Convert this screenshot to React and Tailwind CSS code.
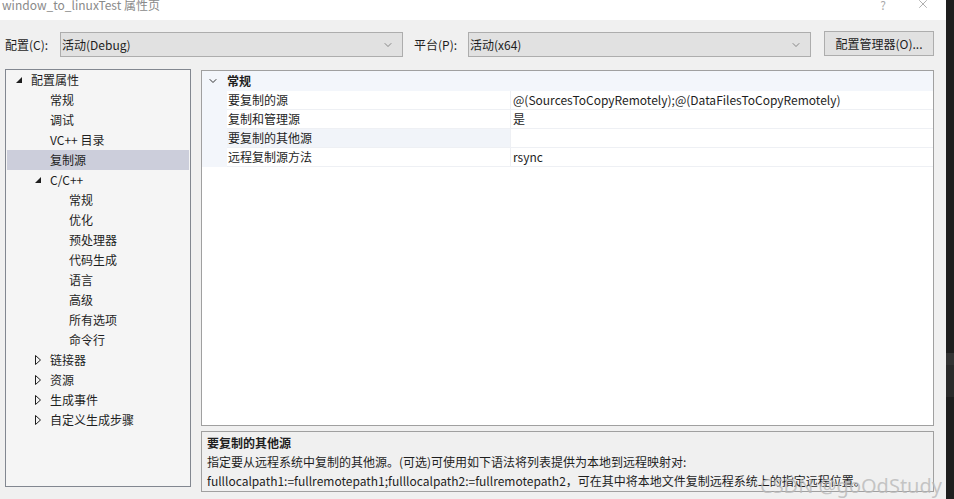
import { ChevronDown, X } from "lucide-react";

const font = { fontFamily: '"Noto Sans CJK SC", "Noto Sans", sans-serif' };

const tree = [
  { label: "配置属性", level: 0, arrow: "open" },
  { label: "常规", level: 1 },
  { label: "调试", level: 1 },
  { label: "VC++ 目录", level: 1 },
  { label: "复制源", level: 1, selected: true },
  { label: "C/C++", level: 1, arrow: "open" },
  { label: "常规", level: 2 },
  { label: "优化", level: 2 },
  { label: "预处理器", level: 2 },
  { label: "代码生成", level: 2 },
  { label: "语言", level: 2 },
  { label: "高级", level: 2 },
  { label: "所有选项", level: 2 },
  { label: "命令行", level: 2 },
  { label: "链接器", level: 1, arrow: "closed" },
  { label: "资源", level: 1, arrow: "closed" },
  { label: "生成事件", level: 1, arrow: "closed" },
  { label: "自定义生成步骤", level: 1, arrow: "closed" },
];

const props = [
  { name: "要复制的源", value: "@(SourcesToCopyRemotely);@(DataFilesToCopyRemotely)" },
  { name: "复制和管理源", value: "是" },
  { name: "要复制的其他源", value: "", selected: true },
  { name: "远程复制源方法", value: "rsync" },
];

const indent = { 0: "ml-[7px]", 1: "ml-[26px]", 2: "ml-[45px]" };

function Arrow({ type }) {
  if (type === "open") {
    return (
      <svg width="7" height="7" viewBox="0 0 7 7">
        <polygon points="6,0 6,6 0,6" fill="#1e1e1e" />
      </svg>
    );
  }
  return (
    <svg width="6" height="10" viewBox="0 0 6 10">
      <polygon points="0.5,0.5 5.5,5 0.5,9.5" fill="none" stroke="#1e1e1e" strokeWidth="1" />
    </svg>
  );
}

function Select({ text, width }) {
  return (
    <div className={`flex h-[25px] ${width} items-center justify-between border border-[#adadad] bg-[#e1e1e1] pl-[1px] pr-[8px] text-[12px] text-[#1e1e1e]`}>
      <span>{text}</span>
      <ChevronDown size={12} strokeWidth={1.3} color="#555" />
    </div>
  );
}

export default function App() {
  return (
    <div className="relative flex h-[499px] w-[954px] overflow-hidden bg-[#1e1e1e]" style={font}>
      <div className="flex w-[946px] flex-col bg-[#f0f0f0]">
        {/* title bar */}
        <div className="flex h-[20px] items-start justify-between bg-white">
          <span className="-mt-[4px] pl-[2px] text-[12px] text-[#8a8a8a]">window_to_linuxTest 属性页</span>
          <div className="flex items-start gap-[30px] pr-[16px]">
            <span className="-mt-[4px] text-[12px] text-[#aaa]">?</span>
            <X size={14} strokeWidth={1} color="#777" className="-mt-[3px]" />
          </div>
        </div>

        {/* config row */}
        <div className="mt-[12px] flex h-[25px] items-center whitespace-nowrap text-[12px] text-[#1e1e1e]">
          <span className="w-[60px] pl-[5px]">配置(C):</span>
          <Select text="活动(Debug)" width="w-[343px]" />
          <span className="w-[65px] pl-[11px]">平台(P):</span>
          <Select text="活动(x64)" width="w-[343px]" />
          <div className="ml-[13px] -mt-[2px] flex h-[25px] w-[110px] items-center justify-center border border-[#adadad] bg-[#e1e1e1]">
            配置管理器(O)...
          </div>
        </div>

        <div className="mt-[12px] flex">
          {/* tree */}
          <div className="ml-[5px] h-[418px] w-[186px] border border-[#828790] bg-[#f5f5f5] text-[12px] text-[#1e1e1e]">
            {tree.map((t, i) => (
              <div
                key={i}
                className={`mx-[1px] flex h-[20px] items-center ${t.selected ? "bg-[#cccedb]" : ""}`}
              >
                <div className={`flex w-[10px] shrink-0 justify-center ${indent[t.level]}`}>
                  {t.arrow && <Arrow type={t.arrow} />}
                </div>
                <span className="ml-[7px]">{t.label}</span>
              </div>
            ))}
          </div>

          {/* right side */}
          <div className="ml-[10px] flex w-[733px] flex-col pt-[1px]">
            <div className="h-[356px] border border-[#a0a0a0] bg-white text-[12px] text-[#1e1e1e]">
              <div className="flex h-[20px] items-center bg-[#f3f6fb]">
                <div className="flex w-[25px] pl-[5px]">
                  <ChevronDown size={12} strokeWidth={2} color="#333" />
                </div>
                <span className="font-bold">常规</span>
              </div>
              {props.map((p, i) => (
                <div key={i} className="flex h-[19px]">
                  <div className="w-[25px] bg-[#f3f6fb]" />
                  <div
                    className={`flex w-[283px] items-center border-b border-[#eef0f4] pl-[1px] ${p.selected ? "bg-[#f1f4f9]" : ""}`}
                  >
                    {p.name}
                  </div>
                  <div className="flex flex-1 items-center border-b border-l border-[#eef0f4] pl-[2px]">
                    {p.value}
                  </div>
                </div>
              ))}
            </div>
            <div className="mt-[5px] h-[61px] border border-[#a0a0a0] px-[5px] pt-[1px] text-[12px] leading-[19px] text-[#1e1e1e]">
              <div className="font-bold">要复制的其他源</div>
              <div>指定要从远程系统中复制的其他源。(可选)可使用如下语法将列表提供为本地到远程映射对:</div>
              <div className="whitespace-nowrap">fulllocalpath1:=fullremotepath1;fulllocalpath2:=fullremotepath2，可在其中将本地文件复制远程系统上的指定远程位置。</div>
            </div>
          </div>
        </div>
      </div>

      {/* dark strip detail */}
      <div className="absolute right-0 top-[353px] h-[12px] w-[8px] bg-[#333]" />
      <div className="absolute right-0 top-[365px] h-[32px] w-[8px] bg-[#2a2a2a]" />

      {/* watermark */}
      <span
        className="absolute left-[760px] top-[476px] text-[20px] leading-none text-[#b8b8b8]/80"
        style={{ fontFamily: '"Noto Sans", sans-serif' }}
      >
        CSDN @goOdStudy
      </span>
    </div>
  );
}
